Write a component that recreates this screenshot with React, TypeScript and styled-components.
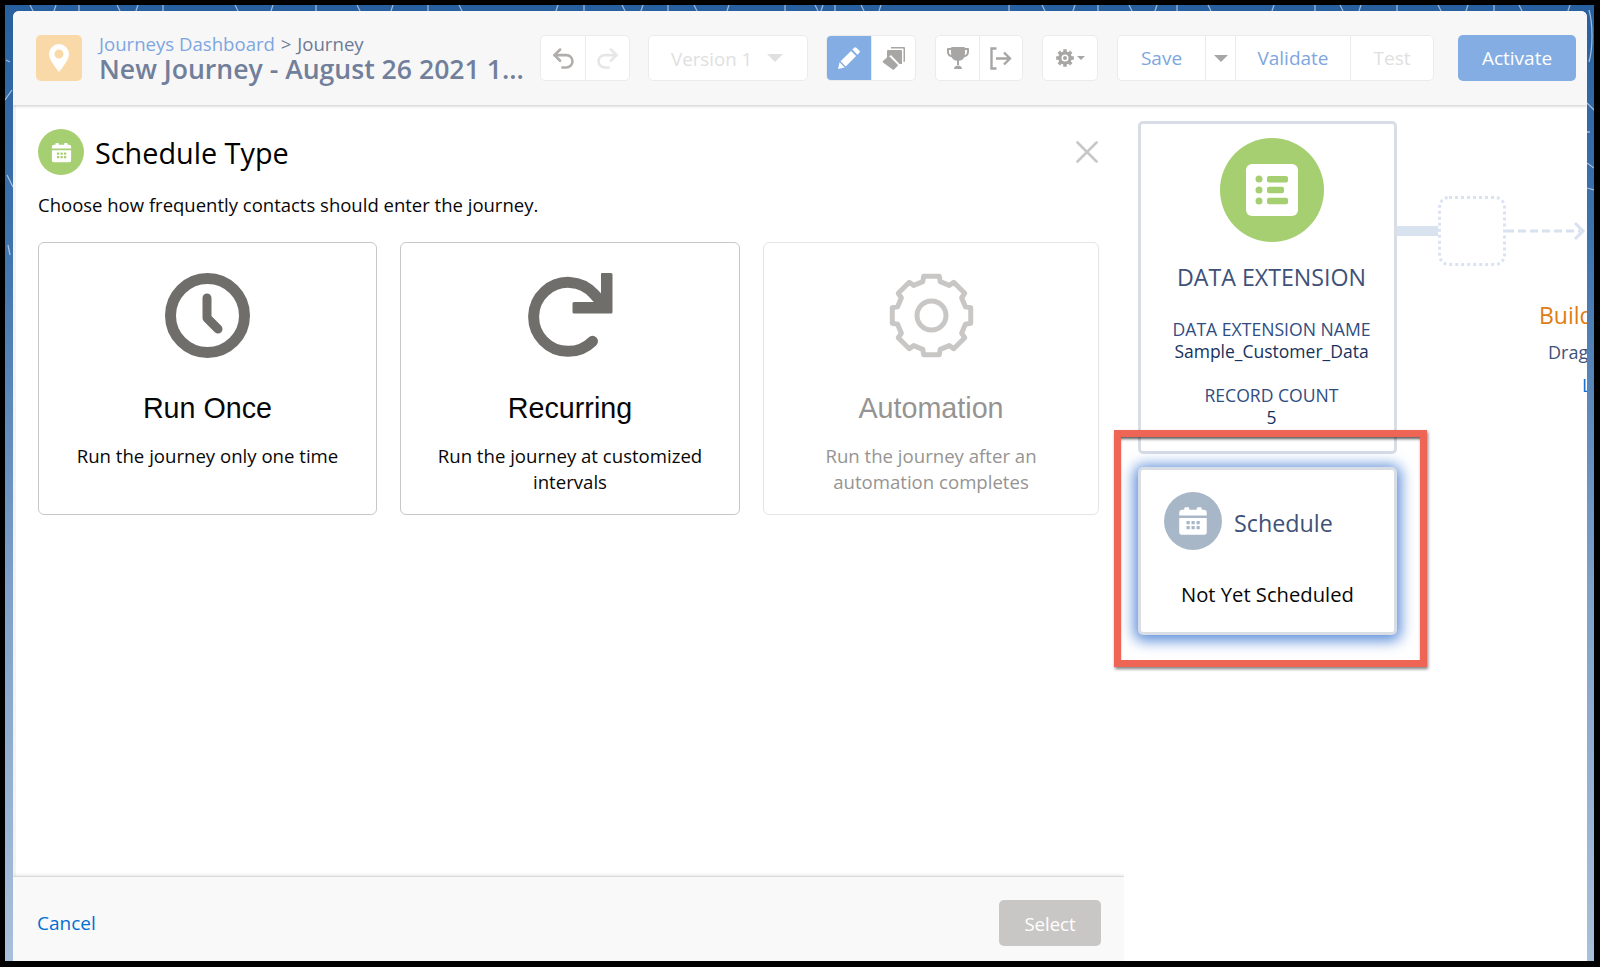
import React from "react";
import styled, { createGlobalStyle } from "styled-components";
import { Undo2, Redo2 } from "lucide-react";

const GlobalStyle = createGlobalStyle`
  html, body {
    margin: 0;
    padding: 0;
    background: #000;
  }
  * {
    box-sizing: border-box;
  }
`;

const SANS = `"Open Sans", "Noto Sans", sans-serif`;

const Page = styled.div`
  width: 1600px;
  height: 967px;
  padding: 5px 6px 6px 5px;
  background: #000;
  font-family: ${SANS};
  overflow: hidden;
`;

const Desktop = styled.div`
  position: relative;
  height: 100%;
  padding: 6px 7px 0 8px;
  background: linear-gradient(180deg, #28609f 0%, #3f74ae 25%, #7d9fc8 60%, #a9c0da 100%);
  overflow: hidden;
`;

const Scribbles = styled.svg`
  position: absolute;
  inset: 0;
  width: 100%;
  height: 100%;
`;

const Window = styled.div`
  position: relative;
  display: flex;
  flex-direction: column;
  height: 100%;
  border-radius: 6px 6px 0 0;
  overflow: hidden;
  background: #fff;
`;

const Header = styled.header`
  position: relative;
  z-index: 2;
  display: flex;
  align-items: center;
  flex: 0 0 94px;
  padding: 0 11px 0 23px;
  background: #f7f7f7;
  box-shadow: 0 1px 3px rgba(0, 0, 0, 0.22);
`;

const PinBadge = styled.div`
  display: flex;
  align-items: center;
  justify-content: center;
  flex: 0 0 46px;
  height: 46px;
  border-radius: 5px;
  background: #fad9a8;
`;

const TitleBlock = styled.div`
  flex: 0 0 441px;
  margin-left: 17px;
  white-space: nowrap;
`;

const Crumbs = styled.div`
  font-size: 18.6px;
  line-height: 22px;
  word-spacing: 1px;
  color: #6c7a94;
`;

const CrumbLink = styled.span`
  display: inline-block;
  word-spacing: 0;
  color: #7ea6e0;
`;

const JourneyName = styled.div`
  font-size: 26.6px;
  line-height: 28px;
  font-weight: 600;
  color: #717f9b;
`;

const ButtonGroup = styled.div<{ $gap?: number }>`
  display: flex;
  flex: 0 0 auto;
  height: 46px;
  margin-left: ${(p) => p.$gap ?? 19}px;
  border: 1.5px solid #ebebeb;
  border-radius: 5px;
  background: #fff;
  overflow: hidden;
`;

const ToolButton = styled.div<{ $width: number; $active?: boolean; $color?: string }>`
  display: flex;
  align-items: center;
  justify-content: center;
  gap: 3px;
  width: ${(p) => p.$width}px;
  font-size: 19px;
  color: ${(p) => p.$color ?? "#7ea6e0"};
  background: ${(p) => (p.$active ? "#84ade3" : "transparent")};
  & + & {
    border-left: 1.5px solid #ebebeb;
  }
`;

const VersionSelect = styled(ButtonGroup)`
  align-items: center;
  width: 160px;
  padding-left: 22px;
  font-size: 18.7px;
  color: #e0e0e0;
`;

const Caret = styled.span<{ $size: number; $color: string }>`
  display: inline-block;
  width: 0;
  height: 0;
  margin-left: ${(p) => p.$size * 1.8}px;
  border-left: ${(p) => p.$size}px solid transparent;
  border-right: ${(p) => p.$size}px solid transparent;
  border-top: ${(p) => p.$size}px solid ${(p) => p.$color};
`;

const SmallCaret = styled(Caret)`
  margin-left: 0;
`;

const ActivateButton = styled.div`
  display: flex;
  align-items: center;
  justify-content: center;
  flex: 0 0 118px;
  height: 46px;
  margin-left: 24px;
  border-radius: 5px;
  font-size: 19px;
  color: #fff;
  background: #84ade3;
`;

const Body = styled.div`
  display: flex;
  flex: 1;
  min-height: 0;
`;

const Drawer = styled.section`
  display: flex;
  flex-direction: column;
  flex: 0 0 1111px;
  background: #f3f3f3;
  box-shadow: 2px 0 5px rgba(0, 0, 0, 0.12);
`;

const DrawerBody = styled.div`
  flex: 1;
  margin-left: 3px;
  padding: 24px 22px 0 22px;
  background: #fff;
`;

const DrawerHead = styled.div`
  display: flex;
  align-items: center;
  gap: 11px;
  height: 46px;
`;

const HeadCircle = styled.div<{ $size: number; $color: string }>`
  display: flex;
  align-items: center;
  justify-content: center;
  flex-shrink: 0;
  width: ${(p) => p.$size}px;
  height: ${(p) => p.$size}px;
  border-radius: 50%;
  background: ${(p) => p.$color};
`;

const DrawerTitle = styled.h2`
  flex: 1;
  margin: 0;
  font-size: 28.8px;
  font-weight: 400;
  color: #000;
`;

const CloseButton = styled.div`
  display: flex;
  margin: 0 4px 0 0;
`;

const Lead = styled.p`
  margin: 17px 0 24px;
  font-size: 18.5px;
  line-height: 26px;
  color: #080707;
`;

const OptionGrid = styled.div`
  display: grid;
  grid-template-columns: 339px 340px 336px;
  gap: 23px;
`;

const OptionCard = styled.div<{ $disabled?: boolean }>`
  display: flex;
  flex-direction: column;
  align-items: center;
  height: 273px;
  padding: 30px 30px 0;
  border: 1.5px solid ${(p) => (p.$disabled ? "#e5e5e5" : "#c9c7c5")};
  border-radius: 6px;
  text-align: center;
  color: ${(p) => (p.$disabled ? "#969492" : "#080707")};
`;

const OptionTitle = styled.div`
  margin-top: 32px;
  font-family: "Liberation Sans", Arial, sans-serif;
  font-size: 28.7px;
  line-height: 36px;
`;

const OptionText = styled.div`
  margin-top: 17px;
  font-size: 18.6px;
  line-height: 26px;
`;

const DrawerFooter = styled.footer`
  display: flex;
  align-items: center;
  justify-content: space-between;
  flex: 0 0 85px;
  padding: 8px 23px 0 24px;
  border-top: 1px solid #dddbda;
  box-shadow: 0 -1px 3px rgba(0, 0, 0, 0.1);
  background: #f9f9f9;
`;

const CancelLink = styled.span`
  font-size: 19px;
  color: #0070d2;
`;

const SelectButton = styled.div`
  display: flex;
  align-items: center;
  justify-content: center;
  width: 102px;
  height: 46px;
  border-radius: 5px;
  font-size: 18.5px;
  color: #fff;
  background: #c9c7c5;
`;

const Canvas = styled.div`
  display: flex;
  flex: 1;
  min-width: 0;
  padding: 16px 0 0 14px;
  background: #fff;
`;

const NodeColumn = styled.div`
  display: flex;
  flex-direction: column;
  gap: 13px;
  flex: 0 0 259px;
`;

const EntryCard = styled.div`
  display: flex;
  flex-direction: column;
  align-items: center;
  height: 333px;
  padding: 14px 0 0 8px;
  border: 3px solid #d8dde6;
  border-radius: 5px;
  text-align: center;
  background: #fff;
`;

const EntryTitle = styled.div`
  margin-top: 19px;
  font-size: 23.2px;
  line-height: 32px;
  color: #3e5178;
`;

const FieldLabel = styled.div<{ $top: number }>`
  margin-top: ${(p) => p.$top}px;
  font-size: 17.6px;
  line-height: 22px;
  color: #2f4d7f;
`;

const FieldValue = styled.div`
  font-size: 17.5px;
  line-height: 22px;
  color: #16325c;
`;

const ScheduleCard = styled.div`
  position: relative;
  height: 168px;
  padding: 22px 0 0 23px;
  border: 3px solid #d8dde6;
  border-radius: 5px;
  background: #fff;
  box-shadow: 0 2px 14px 4px rgba(40, 105, 205, 0.75);
`;

const ScheduleHead = styled.div`
  display: flex;
  align-items: center;
  gap: 12px;
  font-size: 23.3px;
  color: #3e5178;
`;

const ScheduleName = styled.span`
  margin-top: 4px;
`;

const ScheduleStatus = styled.div`
  margin-top: 30px;
  padding-left: 17px;
  font-size: 20.2px;
  line-height: 28px;
  color: #080707;
`;

const Highlight = styled.div`
  position: absolute;
  top: -40px;
  left: -27px;
  right: -33px;
  bottom: -35px;
  border: 7px solid #ee6555;
  box-shadow: 1px 2px 3px rgba(0, 0, 0, 0.5), inset 0 3px 3px -1px rgba(0, 0, 0, 0.65);
  pointer-events: none;
`;

const FlowColumn = styled.div`
  flex: 1;
  min-width: 0;
  overflow: hidden;
`;

const FlowRow = styled.div`
  display: flex;
  align-items: center;
  margin-top: 75px;
`;

const Connector = styled.div`
  flex: 0 0 41px;
  height: 10px;
  background: #d8e3ef;
`;

const DropSlot = styled.div`
  flex: 0 0 68px;
  height: 70px;
  border: 3px dotted #dbe2f2;
  border-radius: 11px;
`;

const BuildPrompt = styled.div`
  margin: 33px 0 0 142px;
  white-space: nowrap;
`;

const BuildTitle = styled.div`
  font-size: 23px;
  line-height: 32px;
  color: #e07c13;
`;

const BuildHint = styled.div`
  margin: 9px 0 0 9px;
  font-size: 18px;
  line-height: 24px;
  color: #3e5178;
`;

const BuildLink = styled.div`
  margin: 9px 0 0 43px;
  font-size: 18px;
  line-height: 24px;
  color: #0070d2;
`;

// gear outline as a closed path, teeth spread evenly round the centre
const gearPath = (cx: number, cy: number, outer: number, inner: number, teeth: number) => {
  const step = (Math.PI * 2) / teeth;
  const parts: string[] = [];
  for (let i = 0; i < teeth; i++) {
    const a = i * step - Math.PI / 2;
    const pts: [number, number][] = [
      [inner, a - step * 0.32],
      [outer, a - step * 0.25],
      [outer, a + step * 0.25],
      [inner, a + step * 0.32],
    ];
    pts.forEach(([r, t]) => {
      parts.push(`${(cx + r * Math.cos(t)).toFixed(2)} ${(cy + r * Math.sin(t)).toFixed(2)}`);
    });
  }
  return `M${parts.join("L")}Z`;
};

const CalendarIcon = ({ size, dot }: { size: number; dot: string }) => (
  <svg width={size} height={size} viewBox="0 0 24 24">
    <path
      fill="#fff"
      d="M6 1h2a1 1 0 0 1 1 1v1h6V2a1 1 0 0 1 1-1h2a1 1 0 0 1 1 1v1h1.5A2.5 2.5 0 0 1 23 5.500V7.500H1V5.500A2.500 2.500 0 0 1 3.500 3H5V2a1 1 0 0 1 1-1zM1 9.500h22V21a2 2 0 0 1-2 2H3a2 2 0 0 1-2-2z"
    />
    {[6.8, 10.8, 14.8].map((x) =>
      [12, 16].map((y) => <rect key={`${x}-${y}`} x={x} y={y} width="2.6" height="2.6" rx="0.4" fill={dot} />)
    )}
  </svg>
);

const ListIcon = () => (
  <svg width="52" height="52" viewBox="0 0 52 52">
    <rect width="52" height="52" rx="6" fill="#fff" />
    <g fill="#a5cf70">
      <circle cx="13" cy="15" r="3.500" />
      <circle cx="13" cy="26" r="3.500" />
      <circle cx="13" cy="37" r="3.500" />
      <rect x="21" y="12" width="21" height="6.500" rx="2" />
      <rect x="21" y="22.800" width="17" height="6.500" rx="2" />
      <rect x="21" y="33.800" width="21" height="6.500" rx="2" />
    </g>
  </svg>
);

const ClockIcon = () => (
  <svg width="85" height="85" viewBox="0 0 85 85" fill="none" stroke="#706e6b">
    <circle cx="42.500" cy="42.500" r="37" strokeWidth="11" />
    <path d="M42 25v20l11 11" strokeWidth="9" strokeLinecap="round" strokeLinejoin="round" />
  </svg>
);

const RepeatIcon = () => (
  <svg width="85" height="85" viewBox="0 0 85 85" fill="none">
    <path d="M64.500 68.300A34.500 34.500 0 1 1 66 21L76 32" stroke="#706e6b" strokeWidth="11" strokeLinecap="round" />
    <path d="M74 0h9a1.500 1.500 0 0 1 1.500 1.500V39a1.500 1.500 0 0 1-1.500 1.500H46a1.500 1.500 0 0 1-1.500-1.500v-8.500A1.500 1.500 0 0 1 46 29h27V1a1 1 0 0 1 1-1z" fill="#706e6b" />
  </svg>
);

const GearOutline = () => (
  <svg width="85" height="85" viewBox="0 0 85 85" fill="none" stroke="#c9c7c5" strokeWidth="5">
    <path d={gearPath(42.5, 42.5, 40, 35, 8)} strokeLinejoin="round" />
    <circle cx="42.500" cy="42.500" r="14.500" />
  </svg>
);

const GearSolid = () => (
  <svg width="18" height="18" viewBox="0 0 18 18">
    <path fillRule="evenodd" fill="#a8a6a4" d={`${gearPath(9, 9, 9, 6.8, 8)}M9 5.500a3.500 3.500 0 1 0 0 7 3.500 3.500 0 0 0 0-7z`} />
    <circle cx="9" cy="9" r="2" fill="#a8a6a4" />
  </svg>
);

const PencilIcon = () => (
  <svg width="22" height="22" viewBox="0 0 22 22" fill="#fff">
    <path d="M0 22l1.600-6.700 5.100 5.100zM2.600 14.300L13 3.900l5.100 5.100L7.700 19.400zM14.300 2.600l1.900-1.900a1.600 1.600 0 0 1 2.200 0l2.900 2.900a1.600 1.600 0 0 1 0 2.200l-1.900 1.900z" />
  </svg>
);

const StackIcon = () => (
  <svg width="23" height="23" viewBox="0 0 23 23" fill="#a8a6a4">
    <path d="M9 0h13a1 1 0 0 1 1 1v13a1 1 0 0 1-1 1h-.500V1.500H9z" />
    <path d="M6 3h13a1 1 0 0 1 1 1v13h-2.500L9 8 5 11.500V4a1 1 0 0 1 1-1z" />
    <path d="M8 10l7.500 7.500a1 1 0 0 1 0 1.400L12 22.500a1 1 0 0 1-1.400 0L1 15.500a1 1 0 0 1 0-1.400L5.500 10a1.800 1.800 0 0 1 2.500 0z" />
  </svg>
);

const TrophyIcon = () => (
  <svg width="22" height="22" viewBox="0 0 22 22" fill="#a8a6a4">
    <path d="M5 0h12a1 1 0 0 1 1 1h3a1 1 0 0 1 1 1v3c0 3-2.500 5-4.700 5.200A6.500 6.500 0 0 1 12 13.800V18h-2v-4.200a6.500 6.500 0 0 1-5.300-3.600C2.500 10 0 8 0 5V2a1 1 0 0 1 1-1h3a1 1 0 0 1 1-1zM2 3v2c0 1.500 1 2.800 2.300 3.100A14 14 0 0 1 4 5.500V3zm16 0v2.500a14 14 0 0 1-.300 2.600C19 7.800 20 6.500 20 5V3z" />
    <path d="M7 22c0-2 1.800-3.500 4-3.500s4 1.500 4 3.500z" />
  </svg>
);

const ExitIcon = () => (
  <svg width="22" height="23" viewBox="0 0 22 23" fill="none" stroke="#a8a6a4" strokeWidth="2.400">
    <path d="M6.500 1.500H1.500v20h5" />
    <path d="M6 11.500h14M14 5.500l6 6-6 6" />
  </svg>
);

const PinIcon = () => (
  <svg width="20" height="28" viewBox="0 0 20 28">
    <path fill="#fff" fillRule="evenodd" d="M10 0a10 10 0 0 1 10 10c0 5.500-5.500 12-10 18C5.500 22 0 15.500 0 10A10 10 0 0 1 10 0zm0 5.500a4.500 4.500 0 1 0 0 9 4.500 4.500 0 0 0 0-9z" />
  </svg>
);

const CloseIcon = () => (
  <svg width="22" height="22" viewBox="0 0 22 22" stroke="#c9c7c5" strokeWidth="2.600" strokeLinecap="round">
    <path d="M1.500 1.500l19 19M20.500 1.500l-19 19" />
  </svg>
);

const DashedArrow = () => (
  <svg width="80" height="20" viewBox="0 0 80 20" fill="none" stroke="#d8e1f0" strokeWidth="3">
    <path d="M0 10h74" strokeDasharray="8 4" />
    <path d="M69 2l8 8-8 8" />
  </svg>
);

// little white strokes of the wallpaper that show round the window
const TOP_TICKS = [25, 51, 74, 112, 133, 158, 230, 268, 311, 352, 388, 423, 454, 553, 579, 617, 638, 663, 689, 724, 780, 810, 818, 830, 856, 876, 1004, 1037, 1070, 1093, 1124, 1152, 1172, 1203, 1269, 1310, 1335, 1356, 1392, 1433, 1463, 1489, 1514, 1565];

const Wallpaper = () => (
  <Scribbles viewBox="0 0 1589 956" fill="none" stroke="#fff" strokeOpacity="0.55" strokeWidth="1.300">
    {TOP_TICKS.map((x, i) => (
      <path key={x} d={`M${x} 0l${i % 3 === 0 ? 3 : i % 3 === 1 ? -2 : 0} 6`} />
    ))}
    <path d="M1584 5c4 14 4 38 0 52" />
    <path d="M1582 98l7 7M1582 158l7 5M1582 183l7 2M1582 127h3" />
    <path d="M2 170l6 12M3 240l2 10M1 55l4 2M0 95l7-10" />
  </Scribbles>
);

export default function App() {
  return (
    <Page>
      <GlobalStyle />
      <Desktop>
        <Wallpaper />
        <Window>
          <Header>
            <PinBadge>
              <PinIcon />
            </PinBadge>
            <TitleBlock>
              <Crumbs>
                <CrumbLink>Journeys Dashboard</CrumbLink> &gt; Journey
              </Crumbs>
              <JourneyName>New Journey - August 26 2021 1...</JourneyName>
            </TitleBlock>
            <ButtonGroup $gap={0}>
              <ToolButton $width={44}>
                <Undo2 size={27} color="#b0adab" strokeWidth={2.3} />
              </ToolButton>
              <ToolButton $width={44}>
                <Redo2 size={27} color="#e6e6e6" strokeWidth={2.3} />
              </ToolButton>
            </ButtonGroup>
            <VersionSelect $gap={18}>
              Version 1
              <Caret $size={8} $color="#e0e0e0" />
            </VersionSelect>
            <ButtonGroup $gap={18}>
              <ToolButton $width={43.5} $active>
                <PencilIcon />
              </ToolButton>
              <ToolButton $width={44.5}>
                <StackIcon />
              </ToolButton>
            </ButtonGroup>
            <ButtonGroup>
              <ToolButton $width={43}>
                <TrophyIcon />
              </ToolButton>
              <ToolButton $width={43}>
                <ExitIcon />
              </ToolButton>
            </ButtonGroup>
            <ButtonGroup>
              <ToolButton $width={54}>
                <GearSolid />
                <SmallCaret $size={4} $color="#a8a6a4" />
              </ToolButton>
            </ButtonGroup>
            <ButtonGroup>
              <ToolButton $width={87}>Save</ToolButton>
              <ToolButton $width={30}>
                <SmallCaret $size={7} $color="#a8a6a4" />
              </ToolButton>
              <ToolButton $width={115}>Validate</ToolButton>
              <ToolButton $width={83} $color="#e0e0e0">
                Test
              </ToolButton>
            </ButtonGroup>
            <ActivateButton>Activate</ActivateButton>
          </Header>
          <Body>
            <Drawer>
              <DrawerBody>
                <DrawerHead>
                  <HeadCircle $size={46} $color="#a5cf70">
                    <CalendarIcon size={21} dot="#a5cf70" />
                  </HeadCircle>
                  <DrawerTitle>Schedule Type</DrawerTitle>
                  <CloseButton>
                    <CloseIcon />
                  </CloseButton>
                </DrawerHead>
                <Lead>Choose how frequently contacts should enter the journey.</Lead>
                <OptionGrid>
                  <OptionCard>
                    <ClockIcon />
                    <OptionTitle>Run Once</OptionTitle>
                    <OptionText>Run the journey only one time</OptionText>
                  </OptionCard>
                  <OptionCard>
                    <RepeatIcon />
                    <OptionTitle>Recurring</OptionTitle>
                    <OptionText>Run the journey at customized intervals</OptionText>
                  </OptionCard>
                  <OptionCard $disabled>
                    <GearOutline />
                    <OptionTitle>Automation</OptionTitle>
                    <OptionText>Run the journey after an automation completes</OptionText>
                  </OptionCard>
                </OptionGrid>
              </DrawerBody>
              <DrawerFooter>
                <CancelLink>Cancel</CancelLink>
                <SelectButton>Select</SelectButton>
              </DrawerFooter>
            </Drawer>
            <Canvas>
              <NodeColumn>
                <EntryCard>
                  <HeadCircle $size={104} $color="#a5cf70">
                    <ListIcon />
                  </HeadCircle>
                  <EntryTitle>DATA EXTENSION</EntryTitle>
                  <FieldLabel $top={25}>DATA EXTENSION NAME</FieldLabel>
                  <FieldValue>Sample_Customer_Data</FieldValue>
                  <FieldLabel $top={22}>RECORD COUNT</FieldLabel>
                  <FieldValue>5</FieldValue>
                </EntryCard>
                <ScheduleCard>
                  <ScheduleHead>
                    <HeadCircle $size={58} $color="#a8b7c7">
                      <CalendarIcon size={30} dot="#a8b7c7" />
                    </HeadCircle>
                    <ScheduleName>Schedule</ScheduleName>
                  </ScheduleHead>
                  <ScheduleStatus>Not Yet Scheduled</ScheduleStatus>
                  <Highlight />
                </ScheduleCard>
              </NodeColumn>
              <FlowColumn>
                <FlowRow>
                  <Connector />
                  <DropSlot />
                  <DashedArrow />
                </FlowRow>
                <BuildPrompt>
                  <BuildTitle>Build your journey</BuildTitle>
                  <BuildHint>Drag and drop activities</BuildHint>
                  <BuildLink>Learn more</BuildLink>
                </BuildPrompt>
              </FlowColumn>
            </Canvas>
          </Body>
        </Window>
      </Desktop>
    </Page>
  );
}
